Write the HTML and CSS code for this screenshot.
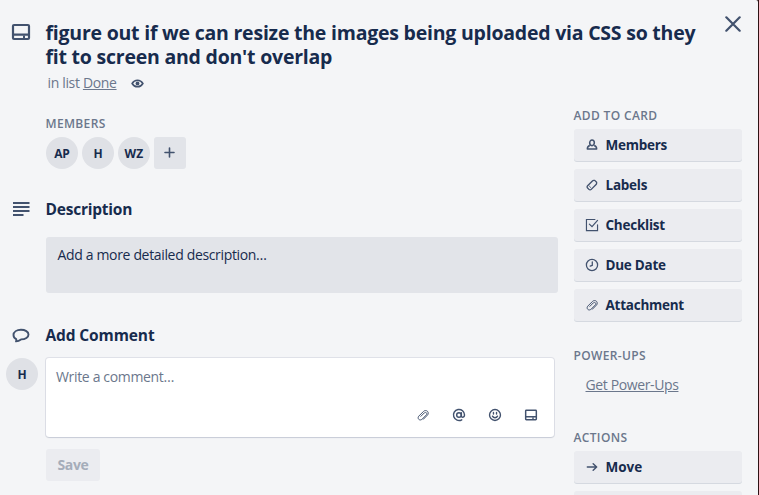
FILE: index.html
```html
<!DOCTYPE html>
<html lang="en">
<head>
<meta charset="utf-8">
<title>Card details</title>
<link rel="stylesheet" href="styles.css">
</head>
<body>
<svg class="defs" aria-hidden="true">
  <symbol id="i-card" viewBox="0 0 24 24"><path fill="none" stroke="currentColor" stroke-width="2.200" stroke-linejoin="round" d="M5 5h14a1 1 0 0 1 1 1v12a1 1 0 0 1-1 1H5a1 1 0 0 1-1-1V6a1 1 0 0 1 1-1zM4 14.600h16"/><path fill="currentColor" d="M14 15.500h2v3h-2z"/></symbol>
  <symbol id="i-clip" viewBox="0 0 24 24"><path fill="none" stroke="currentColor" stroke-width="1.800" stroke-linecap="round" stroke-linejoin="round" d="M12.500 20 20 12.500c2.200-2.200 2.200-5.200.3-7.300-2-2-5.200-2-7.400.2L4.500 13.800c-1.900 1.900-1.900 4.600-.3 6.200s4.300 1.500 6.200-.3l7.600-7.700c1.300-1.300 1.300-3 .3-4-1.100-1.100-2.800-1-4 .2L8 14.500"/></symbol>
</svg>
<div class="window">
  <header class="header">
    <svg class="icon-lg"><use href="#i-card"/></svg>
    <div>
      <h1>figure out if we can resize the images being uploaded via CSS so they fit to screen and don't overlap</h1>
      <p class="in-list"><span>in list <a>Done</a></span>
        <svg class="icon-sm" viewBox="0 0 24 24"><path fill="none" stroke="currentColor" stroke-width="2.800" d="M2 12c2.300-4 5.600-6 10-6s7.700 2 10 6c-2.300 4-5.600 6-10 6S4.300 16 2 12z"/><circle cx="12" cy="12" r="3.500" fill="currentColor"/></svg>
      </p>
    </div>
    <svg class="close" viewBox="0 0 16 16"><path fill="none" stroke="currentColor" stroke-width="2.200" stroke-linecap="round" d="M1.300 1.300l13.400 13.400M14.700 1.300 1.300 14.700"/></svg>
  </header>
  <div class="columns">
    <main class="main">
      <section class="members">
        <h3>MEMBERS</h3>
        <div class="member-list">
          <span class="avatar">AP</span><span class="avatar">H</span><span class="avatar wide">WZ</span>
          <span class="add-member"><svg viewBox="0 0 12 12"><path stroke="currentColor" stroke-width="1.600" stroke-linecap="round" d="M5.500 1v9M1 5.500h9"/></svg></span>
        </div>
      </section>
      <section class="description">
        <div class="section-title">
          <svg class="icon-lg" viewBox="0 0 24 24"><path stroke="currentColor" stroke-width="2" d="M4 6h16.500M4 10h16.500M4 14h16.500M4 18h10.500"/></svg>
          <h2>Description</h2>
        </div>
        <div class="description-box">Add a more detailed description…</div>
      </section>
      <section class="comment">
        <div class="section-title">
          <svg class="icon-lg" viewBox="0 0 24 24"><path fill="none" stroke="currentColor" stroke-width="1.900" stroke-linejoin="round" d="M7.200 16.200C5.400 15.200 4.500 13.700 4.500 12c0-3.200 3.300-5.200 7.500-5.200s7.500 2 7.500 4.700-3 4.900-7.500 4.900c-1.500 1.100-3.200 1.800-5 2 .4-.7.500-1.400.2-2.200z"/></svg>
          <h2 class="comment-title">Add Comment</h2>
        </div>
        <div class="comment-row">
          <span class="avatar">H</span>
          <div class="comment-box">
            <span>Write a comment…</span>
            <div class="tools">
              <svg><use href="#i-clip" x="1.500" y="1.500" width="13" height="13"/></svg>
              <svg viewBox="0 0 24 24"><g fill="none" stroke="currentColor" stroke-width="2.200" stroke-linecap="round"><circle cx="12" cy="12" r="3.500"/><path d="M15.500 8.500v4.800c0 3 4.800 3 4.800-1.300a8.300 8.300 0 1 0-4.200 7.200"/></g></svg>
              <svg viewBox="0 0 24 24"><g fill="none" stroke="currentColor" stroke-width="2.100" stroke-linecap="round"><circle cx="12" cy="12" r="8.200"/><path d="M9.700 8.200v2.200M14.300 8.200v2.200M8.200 13.700c1.500 3.100 6.100 3.100 7.600 0"/></g></svg>
              <svg><use href="#i-card"/></svg>
            </div>
          </div>
        </div>
        <button class="save" disabled>Save</button>
      </section>
    </main>
    <aside class="sidebar">
      <h3>ADD TO CARD</h3>
      <a class="button"><svg viewBox="0 0 24 24"><g fill="none" stroke="currentColor" stroke-width="2.600" stroke-linejoin="round"><ellipse cx="12" cy="8.300" rx="4" ry="4.800"/><path d="M8.300 12.800c-2.700.8-4.300 2.600-4.300 6.200h16c0-3.600-1.600-5.400-4.300-6.200"/></g></svg>Members</a>
      <a class="button"><svg viewBox="0 0 24 24"><g fill="none" stroke="currentColor" stroke-width="2.300" stroke-linejoin="round"><path d="M4.500 13.300 12.700 5c.6-.6 1.300-.9 2.200-.9h1.700l3.300 3.300v1.700c0 .9-.3 1.600-.9 2.200l-8.300 8.200c-1.200 1.200-2.800 1.200-4 0l-2.200-2.200c-1.200-1.200-1.200-2.800 0-4z"/><path d="M7 13.500l3.500 3.500" stroke-width="1.400"/></g></svg>Labels</a>
      <a class="button"><svg viewBox="0 0 24 24"><path fill="none" stroke="currentColor" stroke-width="2" stroke-linecap="round" d="M17 2.500H2.500v19h19V11.500M7.500 10.500l4.500 4.500L21.500 4"/></svg>Checklist</a>
      <a class="button"><svg viewBox="0 0 24 24"><g fill="none" stroke="currentColor" stroke-width="2.200" stroke-linecap="round"><circle cx="12" cy="12" r="9.600"/><path d="M12.500 6.500v6L9 14"/></g></svg>Due Date</a>
      <a class="button"><svg><use href="#i-clip" x=".5" y=".5" width="13" height="13"/></svg>Attachment</a>
      <h3 class="gap">POWER-UPS</h3>
      <a class="power-ups">Get Power-Ups</a>
      <h3 class="gap">ACTIONS</h3>
      <a class="button move"><svg viewBox="0 0 24 24"><path fill="none" stroke="currentColor" stroke-width="2.500" stroke-linecap="round" stroke-linejoin="round" d="M4 12h16M14 6.500l6 5.500-6 5.500"/></svg>Move</a>
      <a class="button last"></a>
    </aside>
  </div>
</div>
</body>
</html>
```
FILE: styles.css
```css
* { box-sizing: border-box; }
body {
  margin: 0;
  height: 495px;
  overflow: hidden;
  background: #2d1214;
  color: #172b4d;
  font: 14px/20px "Open Sans", "Noto Sans", sans-serif;
  letter-spacing: -0.34px;
}
h1, h2, h3, p { margin: 0; }
svg { display: block; flex: none; color: #42526e; }
.defs { position: absolute; width: 0; height: 0; }
.window { width: 758px; height: 495px; background: #f4f5f7; border-top-right-radius: 2px; }

.header { display: flex; height: 97px; padding: 20px 0 0 9.400px; }
.icon-lg { width: 24px; height: 24px; }
.header > div { flex: none; width: 660px; margin: 1px 19.500px 0 12.100px; }
h1 { font-size: 19.500px; line-height: 24px; font-weight: 700; letter-spacing: -0.225px; }
.in-list { display: flex; align-items: center; gap: 14px; padding: 4px 0 0 2px; color: #6b778c; }
.in-list a, .power-ups { text-decoration: underline; }
.icon-sm { width: 13px; height: 13px; }
.close { width: 16px; height: 16px; margin-top: -4px; }

.columns { display: flex; }
.main { width: 558px; }
h3 { font-size: 12px; line-height: 20px; font-weight: 600; letter-spacing: 0.35px; color: #6b778c; text-indent: -0.500px; }
.members { padding: 17px 0 0 46px; }
.member-list { display: flex; gap: 4px; margin-top: 3px; }
.avatar {
  display: block; flex: none; width: 32px; height: 32px; border-radius: 50%;
  background: #dfe1e6; font-size: 12px; line-height: 33px; font-weight: 700;
  text-align: center; letter-spacing: -0.1px;
}
.wide { letter-spacing: 0.2px; }
.add-member {
  display: grid; place-items: center; width: 32px; height: 32px;
  border-radius: 3px; background: #e2e4e9;
}
.add-member svg { width: 12px; height: 12px; }

.section-title { display: flex; align-items: center; gap: 12.400px; height: 24px; padding-left: 9.100px; }
h2 { font-size: 15.500px; line-height: 24px; font-weight: 700; letter-spacing: -0.22px; }
.comment-title { letter-spacing: -0.12px; }
.description { padding-top: 28px; }
.description-box {
  height: 56px; margin: 16px 0 0 46px; padding: 8px 11.500px;
  border-radius: 3px; background: #e2e4e9;
}
.comment { padding-top: 30px; }
.comment-row { display: flex; gap: 8px; padding: 11px 0 0 6px; }
.comment-box {
  display: flex; flex-direction: column; justify-content: space-between;
  width: 508px; height: 79px; padding: 9px 15px 14px 10px;
  border-radius: 3px; background: #fff; color: #6b778c;
  box-shadow: 0 1px 2px -1px rgba(9, 30, 66, .35), 0 0 0 1px #dfe1e8;
}
.tools { display: flex; justify-content: flex-end; gap: 20px; }
.tools svg { width: 16px; height: 16px; }
.save {
  display: block; width: 54px; height: 32px; margin: 12px 0 0 46px; padding: 0;
  border: 0; border-radius: 3px; background: #ebecf0; color: #a5adba;
  font: inherit; font-weight: 700; letter-spacing: -0.33px;
}

.sidebar { width: 168px; margin-left: 16px; padding-top: 9px; }
.button {
  display: flex; align-items: center; gap: 7px; height: 32px; margin-bottom: 8px;
  padding-left: 10.500px; border-radius: 3px; background: #ebecf0;
  box-shadow: 0 1px 0 #d5d9e0; font-size: 13.500px; font-weight: 700; letter-spacing: -0.25px;
}
.button svg { width: 14px; height: 14px; }
h3 + .button { margin-top: 3px; }
.move { letter-spacing: 0; }
.last { height: 4px; margin-bottom: 0; border-radius: 3px 3px 0 0; box-shadow: none; }
.gap { margin-top: 25px; }
.power-ups { display: block; margin: 9px 0 33px; padding-left: 11.500px; color: #6b778c; letter-spacing: -0.38px; }
.power-ups + .gap { margin-top: 0; }
```
